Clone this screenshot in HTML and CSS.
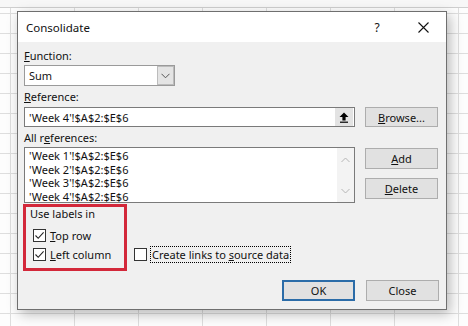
FILE: index.html
```html
<!DOCTYPE html>
<html lang="en">
<head>
  <meta charset="UTF-8">
  <title>Consolidate</title>
  <meta name="viewport" content="width=device-width, initial-scale=1.0">
  <link rel="stylesheet" href="styles.css">
</head>
<body>

  <div class="dialog">
    <div class="titlebar">
      <span class="title">Consolidate</span>
      <span class="tb-btn help">?</span>
      <span class="tb-btn close">
        <svg width="11" height="11" viewBox="0 0 11 11"><path d="M0.5 0.5L10.5 10.5M10.5 0.5L0.5 10.5" stroke="#111" stroke-width="1.1" fill="none"/></svg>
      </span>
    </div>

    <div class="content">
      <div class="label"><u>F</u>unction:</div>
      <div class="select">
        <span class="field-text">Sum</span>
        <span class="select-btn">
          <svg width="9" height="6" viewBox="0 0 9 6"><path d="M0.5 0.8L4.5 4.8L8.5 0.8" stroke="#555" stroke-width="1" fill="none"/></svg>
        </span>
      </div>

      <div class="label gap"><u>R</u>eference:</div>
      <div class="row ref-row">
        <div class="input ref-input">
          <span class="field-text">'Week 4'!$A$2:$E$6</span>
          <span class="collapse-btn">
            <svg width="10" height="11" viewBox="0 0 10 11"><path d="M5 0.5L9.5 5H6.6V8.5H3.4V5H0.5Z" fill="#000"/><rect x="1" y="9.6" width="8" height="1.2" fill="#000"/></svg>
          </span>
        </div>
        <div class="btn">
          <span><u>B</u>rowse...</span>
        </div>
      </div>

      <div class="label gap">All r<u>e</u>ferences:</div>
      <div class="row list-row">
        <div class="input listbox">
          <div class="list-items">
            <div>'Week 1'!$A$2:$E$6</div>
            <div>'Week 2'!$A$2:$E$6</div>
            <div>'Week 3'!$A$2:$E$6</div>
            <div>'Week 4'!$A$2:$E$6</div>
          </div>
          <div class="scrollbar">
            <svg width="9" height="6" viewBox="0 0 9 6"><path d="M0.5 5L4.5 1L8.5 5" stroke="#b5b5b5" stroke-width="1" fill="none"/></svg>
            <svg width="9" height="6" viewBox="0 0 9 6"><path d="M0.5 1L4.5 5L8.5 1" stroke="#b5b5b5" stroke-width="1" fill="none"/></svg>
          </div>
        </div>
        <div class="side-btns">
          <div class="btn tall"><span><u>A</u>dd</span></div>
          <div class="btn tall"><span><u>D</u>elete</span></div>
        </div>
      </div>

      <div class="row labels-row">
        <div class="labels-box">
          <div class="group-title">Use labels in</div>
          <div class="check-row first">
            <span class="checkbox checked">
              <svg width="11" height="11" viewBox="0 0 11 11"><path d="M1.5 5.5L4.2 8.3L9.6 2.4" stroke="#222" stroke-width="1.1" fill="none"/></svg>
            </span>
            <span class="check-text"><u>T</u>op row</span>
          </div>
          <div class="check-row">
            <span class="checkbox checked">
              <svg width="11" height="11" viewBox="0 0 11 11"><path d="M1.5 5.5L4.2 8.3L9.6 2.4" stroke="#222" stroke-width="1.1" fill="none"/></svg>
            </span>
            <span class="check-text"><u>L</u>eft column</span>
          </div>
        </div>
        <div class="check-row links-row">
          <span class="checkbox"></span>
          <span class="check-text focused">Create links to <u>s</u>ource data</span>
        </div>
      </div>

      <div class="row footer-row">
        <div class="btn tall default"><span>OK</span></div>
        <div class="btn tall"><span>Close</span></div>
      </div>
    </div>
  </div>

</body>
</html>
```

FILE: styles.css
```css
:root {
  --face: #f0f0f0;
  --btn: #e1e1e1;
  --btn-border: #adadad;
  --field-border: #7a7a7a;
  --grid: #dedede;
  --mark: #d3283a;
}

html, body {
  margin: 0;
  height: 100%;
}

body {
  font-family: 'Noto Sans', sans-serif;
  font-size: 11px;
  color: #111;
  background-color: #fdfdfd;
  background-image:
    linear-gradient(to bottom, #f7f7f7 7px, #cfcfcf 7px, #cfcfcf 8px, transparent 8px),
    linear-gradient(to right, var(--grid) 1px, transparent 1px),
    linear-gradient(to bottom, var(--grid) 1px, transparent 1px);
  background-size: 100% 8px, 64px 100%, 100% 20px;
  background-repeat: no-repeat, repeat, repeat;
  background-position: 0 0, 10px 0, 0 13px;
  overflow: hidden;
}

.dialog {
  margin: 11px 0 0 17px;
  width: 430px;
  height: 299px;
  box-sizing: border-box;
  border: 1px solid #6f6f6f;
  background: var(--face);
  box-shadow: 3px 4px 12px rgba(0,0,0,0.28);
}

.titlebar {
  height: 30px;
  background: #fff;
  display: flex;
  align-items: center;
}

.title {
  padding-left: 8px;
  font-size: 11.5px;
  flex: 1;
}

.tb-btn {
  width: 46px;
  height: 30px;
  display: flex;
  align-items: center;
  justify-content: center;
}

.help {
  font-size: 12px;
}

.content {
  padding: 6px 7px 0 6px;
}

.label {
  height: 16px;
  line-height: 16px;
}

.label.gap {
  margin-top: 3px;
}

.row {
  display: flex;
}

.field-text {
  padding-left: 4px;
  flex: 1;
  white-space: nowrap;
}

.select {
  margin-top: 1px;
  width: 151px;
  height: 21px;
  box-sizing: border-box;
  border: 1px solid #9a9a9a;
  background: #fff;
  display: flex;
  align-items: center;
}

.select-btn {
  width: 17px;
  height: 19px;
  box-sizing: border-box;
  border: 1px solid #bcbcbc;
  background: #e4e4e4;
  display: flex;
  align-items: center;
  justify-content: center;
}

.input {
  box-sizing: border-box;
  border: 1px solid var(--field-border);
  background: #fff;
}

.ref-row {
  margin-top: 2px;
}

.ref-input {
  width: 331px;
  height: 20px;
  display: flex;
  align-items: center;
  padding-right: 1px;
}

.collapse-btn {
  width: 18px;
  height: 18px;
  background: #e3e3e3;
  display: flex;
  align-items: center;
  justify-content: center;
}

.btn {
  margin-left: 10px;
  width: 73px;
  height: 20px;
  box-sizing: border-box;
  border: 1px solid var(--btn-border);
  background: var(--btn);
  display: flex;
  align-items: center;
  justify-content: center;
}

.btn.tall {
  height: 21px;
}

.list-row {
  margin-top: 1px;
}

.listbox {
  width: 331px;
  height: 56px;
  display: flex;
}

.list-items {
  flex: 1;
  padding: 1px 0 0 4px;
  line-height: 13.5px;
  white-space: nowrap;
}

.scrollbar {
  width: 17px;
  background: #f3f3f3;
  display: flex;
  flex-direction: column;
  align-items: center;
  justify-content: space-between;
  padding: 9px 0 8px;
  box-sizing: border-box;
}

.side-btns {
  display: flex;
  flex-direction: column;
}

.side-btns .btn:first-child {
  margin-top: 1px;
}

.side-btns .btn + .btn {
  margin-top: 9px;
}

.labels-row {
  margin-top: 1px;
  align-items: flex-end;
}

.labels-box {
  margin-left: -1px;
  width: 104px;
  height: 67px;
  box-sizing: border-box;
  border: 3px solid var(--mark);
  padding-left: 4px;
}

.group-title {
  height: 14px;
  line-height: 14px;
  white-space: nowrap;
}

.check-row {
  height: 19px;
  display: flex;
  align-items: center;
  white-space: nowrap;
}

.labels-box .check-row {
  padding-left: 3px;
}

.labels-box .check-row.first {
  margin-top: 5px;
}

.checkbox {
  width: 13px;
  height: 13px;
  box-sizing: border-box;
  border: 1px solid #333;
  background: #fff;
  display: flex;
  align-items: center;
  justify-content: center;
}

.check-text {
  margin-left: 4px;
}

.links-row {
  margin: 0 0 7px 7px;
}

.check-text.focused {
  margin-left: 3px;
  border: 1px dotted #000;
  padding: 0 1px;
  line-height: 15px;
}

.footer-row {
  margin-top: 9px;
  justify-content: flex-end;
}

.footer-row .btn + .btn {
  margin-left: 11px;
}

.btn.default {
  border: 2px solid #2b6ca8;
}
```
